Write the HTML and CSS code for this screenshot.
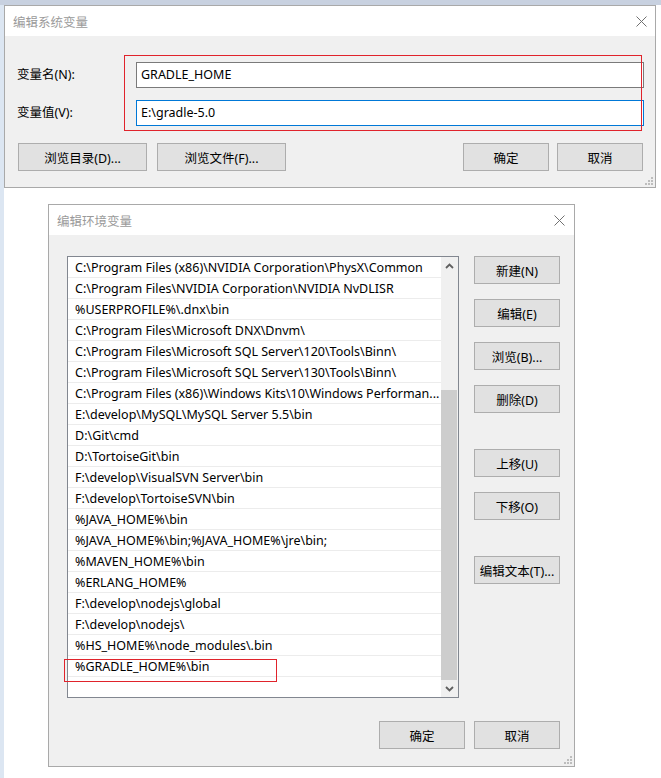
FILE: index.html
```html
<!DOCTYPE html>
<html lang="zh-CN">
<head>
<meta charset="utf-8">
<title>编辑环境变量</title>
<link rel="stylesheet" href="styles.css">
</head>
<body>
<div class="page">
  <div class="dialog dlg-sys">
    <div class="titlebar">
      <span class="title">编辑系统变量</span>
      <svg class="close" width="11" height="11" viewBox="0 0 11 11"><path d="M0.5 0.5L10.5 10.5M10.5 0.5L0.5 10.5" stroke="#707070" stroke-width="1"/></svg>
    </div>
    <div class="body sys-body">
      <div class="form">
        <label class="lbl">变量名(N):</label>
        <div class="input">GRADLE_HOME</div>
        <label class="lbl">变量值(V):</label>
        <div class="input focus">E:\gradle-5.0</div>
      </div>
      <div class="btnrow">
        <button class="btn wide">浏览目录(D)...</button>
        <button class="btn wide">浏览文件(F)...</button>
        <span class="spacer"></span>
        <button class="btn">确定</button>
        <button class="btn">取消</button>
      </div>
      <div class="mark mark-sys"></div>
      <svg class="grip" width="8" height="8" viewBox="0 0 8 8" fill="#bdbdbd"><rect x="6" y="0" width="2" height="2"/><rect x="3" y="3" width="2" height="2"/><rect x="6" y="3" width="2" height="2"/><rect x="0" y="6" width="2" height="2"/><rect x="3" y="6" width="2" height="2"/><rect x="6" y="6" width="2" height="2"/></svg>
    </div>
  </div>

  <div class="dialog dlg-env">
    <div class="titlebar">
      <span class="title">编辑环境变量</span>
      <svg class="close" width="11" height="11" viewBox="0 0 11 11"><path d="M0.5 0.5L10.5 10.5M10.5 0.5L0.5 10.5" stroke="#707070" stroke-width="1"/></svg>
    </div>
    <div class="body env-body">
      <div class="env-main">
        <div class="list">
          <div class="rows">
            <div class="row">C:\Program Files (x86)\NVIDIA Corporation\PhysX\Common</div>
            <div class="row">C:\Program Files\NVIDIA Corporation\NVIDIA NvDLISR</div>
            <div class="row">%USERPROFILE%\.dnx\bin</div>
            <div class="row">C:\Program Files\Microsoft DNX\Dnvm\</div>
            <div class="row">C:\Program Files\Microsoft SQL Server\120\Tools\Binn\</div>
            <div class="row">C:\Program Files\Microsoft SQL Server\130\Tools\Binn\</div>
            <div class="row">C:\Program Files (x86)\Windows Kits\10\Windows Performan...</div>
            <div class="row">E:\develop\MySQL\MySQL Server 5.5\bin</div>
            <div class="row">D:\Git\cmd</div>
            <div class="row">D:\TortoiseGit\bin</div>
            <div class="row">F:\develop\VisualSVN Server\bin</div>
            <div class="row">F:\develop\TortoiseSVN\bin</div>
            <div class="row">%JAVA_HOME%\bin</div>
            <div class="row">%JAVA_HOME%\bin;%JAVA_HOME%\jre\bin;</div>
            <div class="row">%MAVEN_HOME%\bin</div>
            <div class="row">%ERLANG_HOME%</div>
            <div class="row">F:\develop\nodejs\global</div>
            <div class="row">F:\develop\nodejs\</div>
            <div class="row">%HS_HOME%\node_modules\.bin</div>
            <div class="row">%GRADLE_HOME%\bin</div>
            <div class="mark mark-env"></div>
          </div>
          <div class="scrollbar">
            <div class="arrow"><svg width="9" height="6" viewBox="0 0 9 6"><path d="M1 5L4.5 1.5L8 5" fill="none" stroke="#606060" stroke-width="1.8"/></svg></div>
            <div class="track"><div class="thumb"></div></div>
            <div class="arrow"><svg width="9" height="6" viewBox="0 0 9 6"><path d="M1 1L4.5 4.5L8 1" fill="none" stroke="#606060" stroke-width="1.8"/></svg></div>
          </div>
        </div>
        <div class="side">
          <button class="btn">新建(N)</button>
          <button class="btn">编辑(E)</button>
          <button class="btn">浏览(B)...</button>
          <button class="btn">删除(D)</button>
          <button class="btn gap-big">上移(U)</button>
          <button class="btn">下移(O)</button>
          <button class="btn gap-big">编辑文本(T)...</button>
        </div>
      </div>
      <div class="footer">
        <button class="btn">确定</button>
        <button class="btn">取消</button>
      </div>
      <svg class="grip" width="8" height="8" viewBox="0 0 8 8" fill="#bdbdbd"><rect x="6" y="0" width="2" height="2"/><rect x="3" y="3" width="2" height="2"/><rect x="6" y="3" width="2" height="2"/><rect x="0" y="6" width="2" height="2"/><rect x="3" y="6" width="2" height="2"/><rect x="6" y="6" width="2" height="2"/></svg>
    </div>
  </div>
</div>
</body>
</html>
```

FILE: styles.css
```css
* { box-sizing: border-box; }
html, body { margin: 0; padding: 0; }
body {
  background: #ffffff;
  border-top: 5px solid #c8d1e0;
  font-family: "Noto Sans", "Noto Sans CJK SC", sans-serif;
  font-size: 12px;
  color: #000;
  width: 661px;
  height: 778px;
  overflow: hidden;
}
.page {
  border-left: 4px solid #dce6f2;
  min-height: 773px;
}
.dialog {
  border: 1px solid #a9a9a9;
  background: #f0f0f0;
  display: flex;
  flex-direction: column;
}
.titlebar {
  height: 30px;
  background: #ffffff;
  display: flex;
  align-items: center;
  justify-content: space-between;
  padding-left: 8px;
}
.title { color: #9a9a9a; font-size: 12.5px; }
.body { position: relative; }
.grip { position: absolute; right: 2px; bottom: 2px; }

/* system variable dialog */
.dlg-sys { width: 652px; height: 183px; }
.dlg-sys .close { margin-right: 8px; }
.sys-body { height: 151px; padding: 26px 11px 16px 12px; }
.form {
  display: grid;
  grid-template-columns: 119px 508px;
  row-gap: 12px;
  align-items: center;
}
.lbl { line-height: 26px; font-size: 12.5px; }
.input {
  height: 26px;
  border: 1px solid #7a7a7a;
  background: #fff;
  padding-left: 4px;
  line-height: 24px;
  font-size: 12.5px;
}
.input.focus { border-color: #0078d7; }
.btnrow {
  display: flex;
  margin-top: 17px;
  padding-left: 1px;
  padding-right: 1px;
}
.btnrow .spacer { flex: 1; }
.btnrow .wide + .wide { margin-left: 10px; }
.btnrow .btn + .btn:not(.wide) { margin-left: 8px; }
.btn {
  width: 86px;
  height: 28px;
  background: #e1e1e1;
  border: 1px solid #adadad;
  font-family: inherit;
  font-size: 12.5px;
  color: #000;
  padding: 0;
  margin: 0;
}
.btn.wide { width: 129px; }
.mark {
  position: absolute;
  border: 1px solid #e0232b;
  pointer-events: none;
}
.mark-sys { left: 119px; top: 19px; width: 518px; height: 76px; }

/* env dialog */
.dlg-env { width: 527px; height: 563px; margin: 16px 0 0 44px; }
.dlg-env .close { margin-right: 9px; }
.env-body { height: 531px; padding: 21px 14px 17px 18px; }
.env-main { display: flex; gap: 15px; }
.list {
  width: 392px;
  height: 442px;
  border: 1px solid #828790;
  background: #fff;
  display: flex;
}
.rows { position: relative; width: 373px; }
.row {
  height: 21px;
  line-height: 22px;
  border-bottom: 1px solid #ececec;
  padding-left: 7px;
  white-space: nowrap;
  font-size: 12.5px;
}
.mark-env { left: -4px; top: 402px; width: 213px; height: 23px; }
.scrollbar {
  width: 17px;
  background: #f0f0f0;
  display: flex;
  flex-direction: column;
}
.arrow { height: 17px; display: flex; align-items: center; justify-content: center; }
.track { flex: 1; padding-top: 116px; }
.thumb { height: 290px; background: #cdcdcd; margin-right: 1px; }
.side { display: flex; flex-direction: column; }
.side .btn + .btn { margin-top: 15px; }
.side .btn.gap-big { margin-top: 36px; }
.footer {
  display: flex;
  justify-content: flex-end;
  gap: 9px;
  margin-top: 23px;
}
```
